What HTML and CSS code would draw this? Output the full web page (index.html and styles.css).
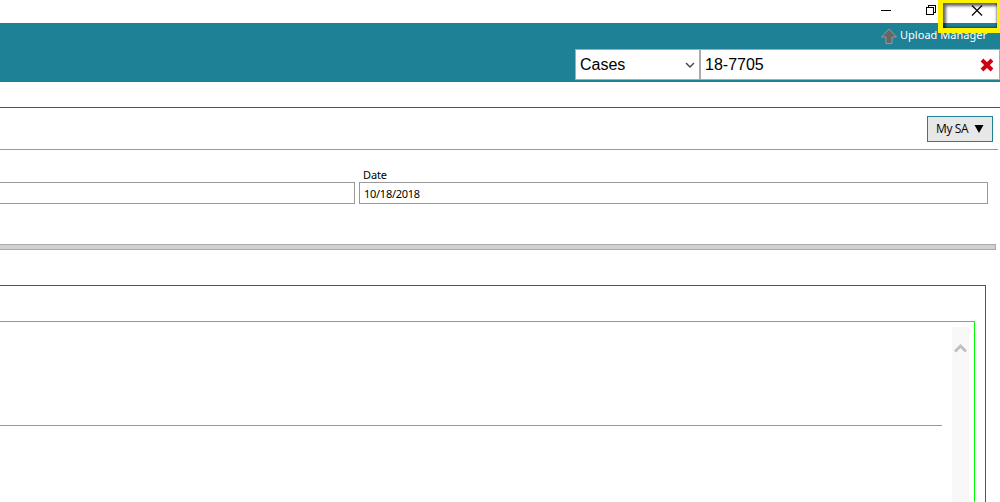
FILE: index.html
```html
<!DOCTYPE html>
<html lang="en">
<head>
<meta charset="utf-8">
<title>Cases</title>
<link rel="stylesheet" href="styles.css">
</head>
<body>
<div class="titlebar">
  <svg class="win-icons" width="110" height="23" viewBox="0 0 110 23" fill="none" stroke="#000" shape-rendering="crispEdges">
    <path d="M1 10.5h10"/>
    <path d="M46.500 7.500h7v7h-7zM48.500 7.500v-2h7v7h-2"/>
    <path d="M92 5.500l10 10M102 5.500l-10 10" shape-rendering="auto" stroke-width="1.200"/>
  </svg>
</div>
<header class="header">
  <div class="upload">
    <svg width="18" height="17" viewBox="0 0 18 17"><path d="M9 1L16.500 9H12V15.500H6V9H1.500z" fill="#666" stroke="#aaa49f" stroke-width=".8"/></svg>
    <span class="upload-label">Upload Manager</span>
  </div>
  <div class="search">
    <div class="search-type"><span class="type-label">Cases</span>
      <svg width="10" height="8" viewBox="0 0 10 8"><path d="M1 2l4 4 4-4" fill="none" stroke="#444" stroke-width="1.400"/></svg>
    </div>
    <div class="search-value"><span class="value-label">18-7705</span>
      <svg width="14" height="14" viewBox="0 0 14 14"><path d="M2 2l10 10M12 2l-10 10" stroke="#d00010" stroke-width="3.900"/></svg>
    </div>
  </div>
</header>
<main class="content">
  <div class="toolbar"><div class="my-sa"><span class="sa-label">My SA</span><svg width="10" height="8" viewBox="0 0 10 8"><path d="M.5 0h9L5 8z"/></svg></div></div>
  <div class="fields">
    <div class="field field-left"><div class="box"></div></div>
    <div class="field field-date"><div class="caption"><span>Date</span></div><div class="box"><span>10/18/2018</span></div></div>
  </div>
  <div class="splitter"></div>
  <section class="panel">
    <div class="viewer">
      <div class="page"></div>
      <div class="scrollbar"><svg width="13" height="12" viewBox="0 0 13 12"><path d="M1 9.500l5.500-5.500 5.500 5.500" fill="none" stroke="#bfbfbf" stroke-width="2.800"/></svg></div>
    </div>
  </section>
</main>
<div class="highlight"></div>
</body>
</html>
```
FILE: styles.css
```css
* { box-sizing: border-box; }
body { margin: 0; width: 1000px; height: 502px; overflow: hidden; background: #fff; color: #000; font: 11px "Open Sans", sans-serif; position: relative; }
svg { display: block; flex: none; }
.titlebar { height: 23px; display: flex; justify-content: flex-end; padding-right: 10px; }
.header { height: 59px; background: #1e8196; }
.upload { height: 26px; display: flex; align-items: center; padding-left: 880px; gap: 2px; color: #fff; }
.upload-label { font: 11px/16px "Noto Sans", sans-serif; letter-spacing: .03px; white-space: nowrap; margin-top: -2px; }
.search { display: flex; height: 31px; margin-left: 575px; font: 16px/29px "Liberation Sans", sans-serif; }
.search-type, .search-value { display: flex; align-items: center; justify-content: space-between; background: #fff; border: 1px solid #ababab; }
.search-type { width: 125px; padding: 0 4px; }
.search-value { flex: 1; padding: 0 5px 0 4px; }
.content { display: flex; flex-direction: column; height: 395px; margin-top: 25px; border-top: 1px solid #555; }
.toolbar { display: flex; justify-content: flex-end; width: 998px; height: 42px; padding: 8px 5px 0 0; border-bottom: 1px solid #999; }
.my-sa { display: flex; align-items: center; gap: 6px; width: 66px; height: 26px; padding: 0 0 1px 8px; background: #e7e7e7; border: 1px solid #1e8196; }
.sa-label { font: 12px "Open Sans", sans-serif; letter-spacing: -.4px; white-space: nowrap; }
.fields { display: flex; align-items: flex-end; gap: 4px; height: 54px; width: 988px; }
.field-left { width: 355px; }
.field-left .box { border-left: 0; }
.field-date { flex: 1; }
.caption { padding-left: 4px; font: 11px/14px "Noto Sans", sans-serif; letter-spacing: -.15px; }
.box { height: 22px; border: 1px solid #999; padding-left: 4px; font: 11px/22px "Noto Sans", sans-serif; letter-spacing: -.27px; }
.splitter { flex: none; width: 996px; height: 6px; margin-top: 40px; background: #d0d0d0; border: 1px solid #aaa; border-left: 0; }
.panel { flex: 1; width: 986px; margin-top: 35px; padding: 35px 10px 0 0; border: solid #555; border-width: 1px 1px 0 0; }
.viewer { display: flex; justify-content: space-between; width: 975px; height: 181px; padding: 5px 5px 0 0; border: solid #0f0; border-width: 1px 1px 0 0; }
.page { width: 942px; height: 99px; border-bottom: 1px solid #999; }
.scrollbar { width: 17px; padding: 15px 0 0 2px; background: #f8f8f8; }
.highlight { position: absolute; left: 938px; top: -2px; width: 62px; height: 35px; border: 5px solid #fff200; border-right-width: 3px; box-shadow: inset 3px 3px 3px #0009, inset -1px -1px 2px #0006; }
```
